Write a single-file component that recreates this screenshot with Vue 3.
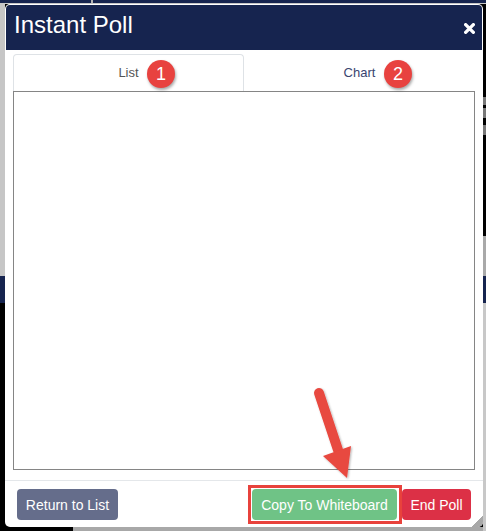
<template>
  <div class="page">
    <div class="modal">
      <div class="modal-header">
        <h1>Instant Poll</h1>
        <svg class="close" width="11" height="11" viewBox="0 0 12 12">
          <path d="M1.8 1.8 L10.2 10.2 M10.2 1.8 L1.8 10.2" stroke="#fff" stroke-width="3.6" stroke-linecap="round" fill="none" />
        </svg>
      </div>

      <div class="modal-body">
        <div class="tabs">
          <div
            v-for="(tab, index) in tabs"
            :key="tab.name"
            :class="['tab', { active: activeTab === index }]"
            @click="activeTab = index"
          >
            {{ tab.name }}
          </div>
        </div>
        <div class="tab-content"></div>
      </div>

      <div class="modal-footer">
        <button class="btn btn-return">Return to List</button>
        <div class="right-buttons">
          <button class="btn btn-copy">Copy To Whiteboard</button>
          <button class="btn btn-end">End Poll</button>
        </div>
      </div>

      <div class="grip"></div>
    </div>

    <!-- annotations -->
    <div class="badge badge-one">1</div>
    <div class="badge badge-two">2</div>
    <div class="highlight"></div>
    <svg class="arrow" width="60" height="100" viewBox="0 0 60 100">
      <defs>
        <filter id="arrow-shadow" x="-30%" y="-30%" width="160%" height="160%">
          <feDropShadow dx="1" dy="1" stdDeviation="1.2" flood-color="#000" flood-opacity="0.3" />
        </filter>
      </defs>
      <g filter="url(#arrow-shadow)" fill="#e8483f">
        <path d="M12 13 L31 70" stroke="#e8483f" stroke-width="10" stroke-linecap="round" fill="none" />
        <path d="M16 76 L44 66 L40 98 Z" />
      </g>
    </svg>
  </div>
</template>

<script setup>
import { ref } from 'vue'

const activeTab = ref(0)

const tabs = [
  { name: 'List' },
  { name: 'Chart' }
]
</script>

<style>
html,
body {
  margin: 0;
  background: #000;
}
</style>

<style scoped>
.page {
  position: relative;
  width: 486px;
  height: 531px;
  overflow: hidden;
  box-sizing: border-box;
  padding: 4px 3px 4px 5px;
  font-family: "Liberation Sans", Arial, sans-serif;
  background:
    linear-gradient(#16244f, #16244f) 0 276px / 100% 27px no-repeat,
    linear-gradient(#c6c6c6, #c6c6c6) 0 3px / 100% 1px no-repeat,
    linear-gradient(#c6c6c6, #c6c6c6) 0 4px / 5px 272px no-repeat,
    linear-gradient(#c8c8c8, #c8c8c8) 483px 303px / 3px 228px no-repeat,
    linear-gradient(#a9a9a9, #a9a9a9) 483px 236px / 3px 40px no-repeat,
    linear-gradient(#777, #777) 483px 97px / 3px 8px no-repeat,
    linear-gradient(#777, #777) 483px 108px / 3px 10px no-repeat,
    linear-gradient(#777, #777) 483px 125px / 3px 10px no-repeat,
    linear-gradient(#a8a8a8, #a8a8a8) 73px 527px / 413px 4px no-repeat,
    linear-gradient(#b5b5b5, #b5b5b5) 91px 0 / 2px 3px no-repeat,
    linear-gradient(#16244f, #16244f) 0 0 / 100% 3px no-repeat,
    #000;
}

.modal {
  position: relative;
  height: 523px;
  background: #fff;
  border-radius: 5px;
  overflow: hidden;
  display: flex;
  flex-direction: column;
}

.modal-header {
  height: 45px;
  margin: 1px 1px 0;
  background: #16244f;
  border-radius: 4px 4px 0 0;
  display: flex;
  justify-content: space-between;
  padding: 0 7px 0 8px;
  box-sizing: border-box;
  flex-shrink: 0;
}

.modal-header h1 {
  margin: 0;
  font-size: 24px;
  font-weight: 400;
  line-height: 40px;
  color: #fff;
}

.close {
  margin-top: 18px;
}

.modal-body {
  flex: 1;
  padding: 4px 8px 0;
  display: flex;
  flex-direction: column;
}

.tabs {
  display: flex;
  height: 37px;
  flex-shrink: 0;
}

.tab {
  flex: 1;
  text-align: center;
  font-size: 13px;
  line-height: 37px;
  color: #3a4570;
  box-sizing: border-box;
  cursor: pointer;
}

.tab.active {
  color: #555;
  flex: 0 0 231px;
  line-height: 36px;
  border: 1px solid #dee2e6;
  border-bottom: 0;
  border-radius: 4px 4px 0 0;
}

.tab-content {
  height: 379px;
  box-sizing: border-box;
  border: 1px solid #858585;
}

.modal-footer {
  height: 47px;
  margin-top: 10px;
  border-top: 1px solid #e4e7ea;
  box-sizing: border-box;
  display: flex;
  justify-content: space-between;
  padding: 8px 12px 0;
  flex-shrink: 0;
}

.right-buttons {
  display: flex;
  gap: 5px;
}

.btn {
  height: 31px;
  border: 0;
  border-radius: 4px;
  color: #fff;
  font-family: inherit;
  font-size: 14px;
  padding: 0;
}

.btn-return {
  width: 101px;
  background: #656d8b;
}

.btn-copy {
  width: 145px;
  background: #6fc386;
}

.btn-end {
  width: 69px;
  background: #dc3046;
}

.grip {
  position: absolute;
  right: 0;
  bottom: 0;
  width: 11px;
  height: 11px;
  background: linear-gradient(135deg, transparent 50%, #a8a8a8 50%);
}

.badge {
  position: absolute;
  top: 60px;
  width: 28px;
  height: 28px;
  border-radius: 50%;
  background: #e8423f;
  color: #fff;
  font-size: 18px;
  line-height: 28px;
  text-align: center;
  box-shadow: 1px 2px 3px rgba(0, 0, 0, 0.35);
}

.badge-one {
  left: 147px;
}

.badge-two {
  left: 384px;
}

.highlight {
  position: absolute;
  left: 248px;
  top: 485px;
  width: 154px;
  height: 39px;
  box-sizing: border-box;
  border: 3px solid #e8423c;
}

.arrow {
  position: absolute;
  left: 307px;
  top: 380px;
}
</style>
